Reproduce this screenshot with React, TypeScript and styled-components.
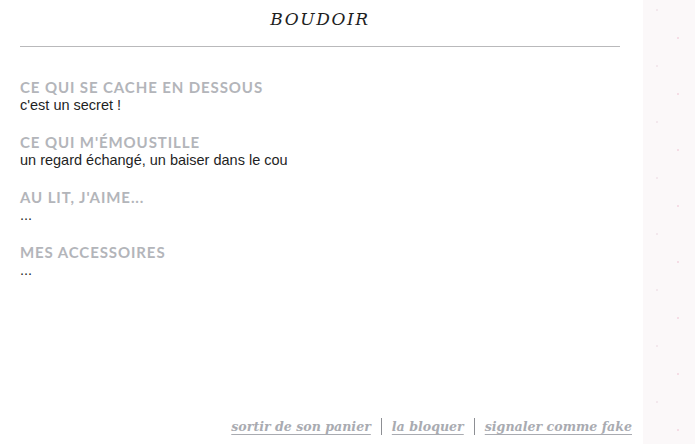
import { Fragment } from 'react';
import styled, { createGlobalStyle } from 'styled-components';

const GlobalStyle = createGlobalStyle`
  html, body {
    margin: 0;
    padding: 0;
    background: #fbf8f9;
  }
  #root {
    height: 444px;
  }
`;

const Page = styled.div`
  display: flex;
  height: 444px;
  overflow: hidden;
`;

const Panel = styled.div`
  width: 643px;
  flex-shrink: 0;
  background: #ffffff;
  box-shadow: 2px 0 6px rgba(220, 200, 210, 0.3);
  display: flex;
  flex-direction: column;
  padding: 0 11px 0 20px;
  box-sizing: border-box;
`;

const Side = styled.div`
  flex: 1;
  background-color: #fbf8f9;
  background-image:
    radial-gradient(circle, rgba(240, 200, 215, 0.55) 1px, transparent 1.5px),
    radial-gradient(circle, rgba(235, 215, 225, 0.5) 1px, transparent 1.5px);
  background-size: 42px 56px, 42px 56px;
  background-position: 14px 10px, 35px 38px;
`;

const Title = styled.h1`
  margin: 0;
  padding: 8px 12px 0 0;
  height: 46px;
  box-sizing: border-box;
  text-align: center;
  font-family: 'DejaVu Serif', 'Liberation Serif', serif;
  font-style: italic;
  font-weight: normal;
  font-size: 17px;
  line-height: 22px;
  letter-spacing: 1.6px;
  color: #1e1e1e;
`;

const Rule = styled.hr`
  margin: 0 12px 0 0;
  border: none;
  border-top: 1px solid #b9b9bb;
`;

const Sections = styled.div`
  display: flex;
  flex-direction: column;
  gap: 19px;
  padding-top: 31px;
  flex: 1;
`;

const Section = styled.div`
  display: flex;
  flex-direction: column;
`;

const Heading = styled.h2`
  margin: 0;
  font-family: 'Lato', 'Noto Sans', sans-serif;
  font-weight: 700;
  font-size: 15px;
  line-height: 19px;
  letter-spacing: 0.9px;
  text-transform: uppercase;
  color: #b3b5ba;
`;

const Answer = styled.p`
  margin: 0;
  font-family: 'Liberation Sans', Arial, sans-serif;
  font-size: 14.5px;
  line-height: 17px;
  color: #1f1f1f;
`;

const Footer = styled.div`
  display: flex;
  justify-content: flex-end;
  align-items: center;
  gap: 10px;
  padding: 0 0 9px;
`;

const Action = styled.a`
  font-family: 'DejaVu Serif', 'Liberation Serif', serif;
  font-style: italic;
  font-weight: bold;
  font-size: 12.6px;
  color: #a9abb1;
  text-decoration: underline;
  text-underline-offset: 3px;
  text-decoration-thickness: 1px;
  cursor: pointer;
`;

const Divider = styled.span`
  width: 1px;
  height: 17px;
  background: #8d8f94;
`;

const items = [
  { q: 'Ce qui se cache en dessous', a: "c'est un secret !" },
  { q: "Ce qui m'émoustille", a: 'un regard échangé, un baiser dans le cou' },
  { q: "Au lit, j'aime...", a: '...' },
  { q: 'Mes accessoires', a: '...' },
];

const actions = ['sortir de son panier', 'la bloquer', 'signaler comme fake'];

export default function App() {
  return (
    <>
      <GlobalStyle />
      <Page>
        <Panel>
          <Title>BOUDOIR</Title>
          <Rule />
          <Sections>
            {items.map((it) => (
              <Section key={it.q}>
                <Heading>{it.q}</Heading>
                <Answer>{it.a}</Answer>
              </Section>
            ))}
          </Sections>
          <Footer>
            {actions.map((label, i) => (
              <Fragment key={label}>
                {i > 0 && <Divider />}
                <Action>{label}</Action>
              </Fragment>
            ))}
          </Footer>
        </Panel>
        <Side />
      </Page>
    </>
  );
}
